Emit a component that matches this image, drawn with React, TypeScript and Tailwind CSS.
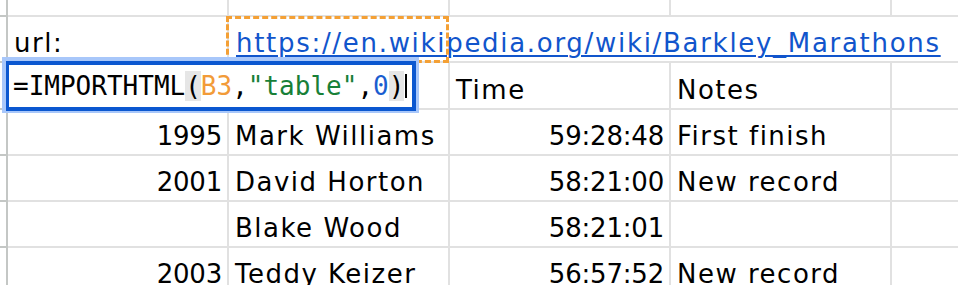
import React from "react";

type Row = {
  h: string;
  cells: { text?: string; right?: boolean }[];
};

const rows: Row[] = [
  { h: "h-[47px]", cells: [{}, {}, { text: "Time" }, { text: "Notes" }] },
  {
    h: "h-[46px]",
    cells: [
      { text: "1995", right: true },
      { text: "Mark Williams" },
      { text: "59:28:48", right: true },
      { text: "First finish" },
    ],
  },
  {
    h: "h-[46px]",
    cells: [
      { text: "2001", right: true },
      { text: "David Horton" },
      { text: "58:21:00", right: true },
      { text: "New record" },
    ],
  },
  {
    h: "h-[46px]",
    cells: [
      {},
      { text: "Blake Wood" },
      { text: "58:21:01", right: true },
      {},
    ],
  },
  {
    h: "h-[46px]",
    cells: [
      { text: "2003", right: true },
      { text: "Teddy Keizer" },
      { text: "56:57:52", right: true },
      { text: "New record" },
    ],
  },
];

const font = "font-['DejaVu_Sans',sans-serif] text-[26px] leading-[30px] tracking-[1.5px] text-black";

function Gutter() {
  return <div className="w-[8px] shrink-0 border-b-2 border-r-2 border-[#c4c7c5]" />;
}

function Cell({ text, right }: { text?: string; right?: boolean }) {
  return (
    <div
      className={[
        "flex w-[221px] shrink-0 items-end border-b-2 border-r-2 border-[#e1e1e1] pb-[3px] pl-[6px] pr-[5px]",
        right ? "justify-end tracking-[-0.2px]" : "justify-start",
      ].join(" ")}
    >
      {text && <span className="whitespace-nowrap">{text}</span>}
    </div>
  );
}

export default function App() {
  return (
    <div className={`relative h-[285px] w-[958px] overflow-hidden bg-white ${font}`}>
      {/* row 1 */}
      <div className="flex h-[17px]">
        <Gutter />
        <div className="w-[221px] shrink-0 border-b-2 border-r-2 border-[#e1e1e1]" />
        <div className="w-[221px] shrink-0 border-b-2 border-r-2 border-[#e1e1e1]" />
        <div className="w-[221px] shrink-0 border-b-2 border-r-2 border-[#e1e1e1]" />
        <div className="w-[221px] shrink-0 border-b-2 border-r-2 border-[#e1e1e1]" />
        <div className="flex-1 border-b-2 border-[#e1e1e1]" />
      </div>

      {/* row 2: url */}
      <div className="flex h-[46px]">
        <Gutter />
        <div className="flex w-[221px] shrink-0 items-end border-b-2 border-r-2 border-[#e1e1e1] pb-[3px] pl-[6px]">
          url:
        </div>
        <div className="flex w-[221px] shrink-0 items-end border-b-2 border-[#e1e1e1] pb-[3px] pl-[7px]">
          <span className="whitespace-nowrap tracking-[1.7px] text-[#1155cc] underline decoration-2 underline-offset-[3px]">
            https://en.wikipedia.org/wiki/Barkley_Marathons
          </span>
        </div>
        <div className="w-[221px] shrink-0 border-b-2 border-[#e1e1e1]" />
        <div className="w-[221px] shrink-0 border-b-2 border-[#e1e1e1]" />
        <div className="flex-1 border-b-2 border-[#e1e1e1]" />
      </div>

      {/* data rows */}
      {rows.map((row, i) => (
        <div key={i} className={`flex ${row.h}`}>
          <Gutter />
          {row.cells.map((c, j) => (
            <Cell key={j} text={c.text} right={c.right} />
          ))}
          <div className="flex-1 border-b-2 border-[#e1e1e1]" />
        </div>
      ))}

      {/* copy marquee on B2 */}
      <div className="absolute left-[226px] top-[16px] h-[47px] w-[223px] border-[3px] border-dashed border-[#f4a035]" />

      {/* formula editor on A3 */}
      <div className="absolute left-[2px] top-[57px] h-[56px] w-[417px] border-b-2 border-l-4 border-r-[3px] border-t-4 border-[#a8c7fa]">
        <div className="flex h-full items-center border-4 border-l-[3px] border-[#0b57d0] bg-white pl-[4px] font-['DejaVu_Sans_Mono',monospace] text-[26px] leading-[30px] tracking-normal whitespace-nowrap">
          <span>=IMPORTHTML</span>
          <span className="bg-[#e6e6e6]">(</span>
          <span className="text-[#f29b38]">B3</span>
          <span>,</span>
          <span className="text-[#188038]">"table"</span>
          <span>,</span>
          <span className="text-[#1a5dd0]">0</span>
          <span className="bg-[#e6e6e6]">)</span>
          <span className="ml-[1px] inline-block h-[24px] w-[2px] bg-black" />
        </div>
      </div>
    </div>
  );
}
